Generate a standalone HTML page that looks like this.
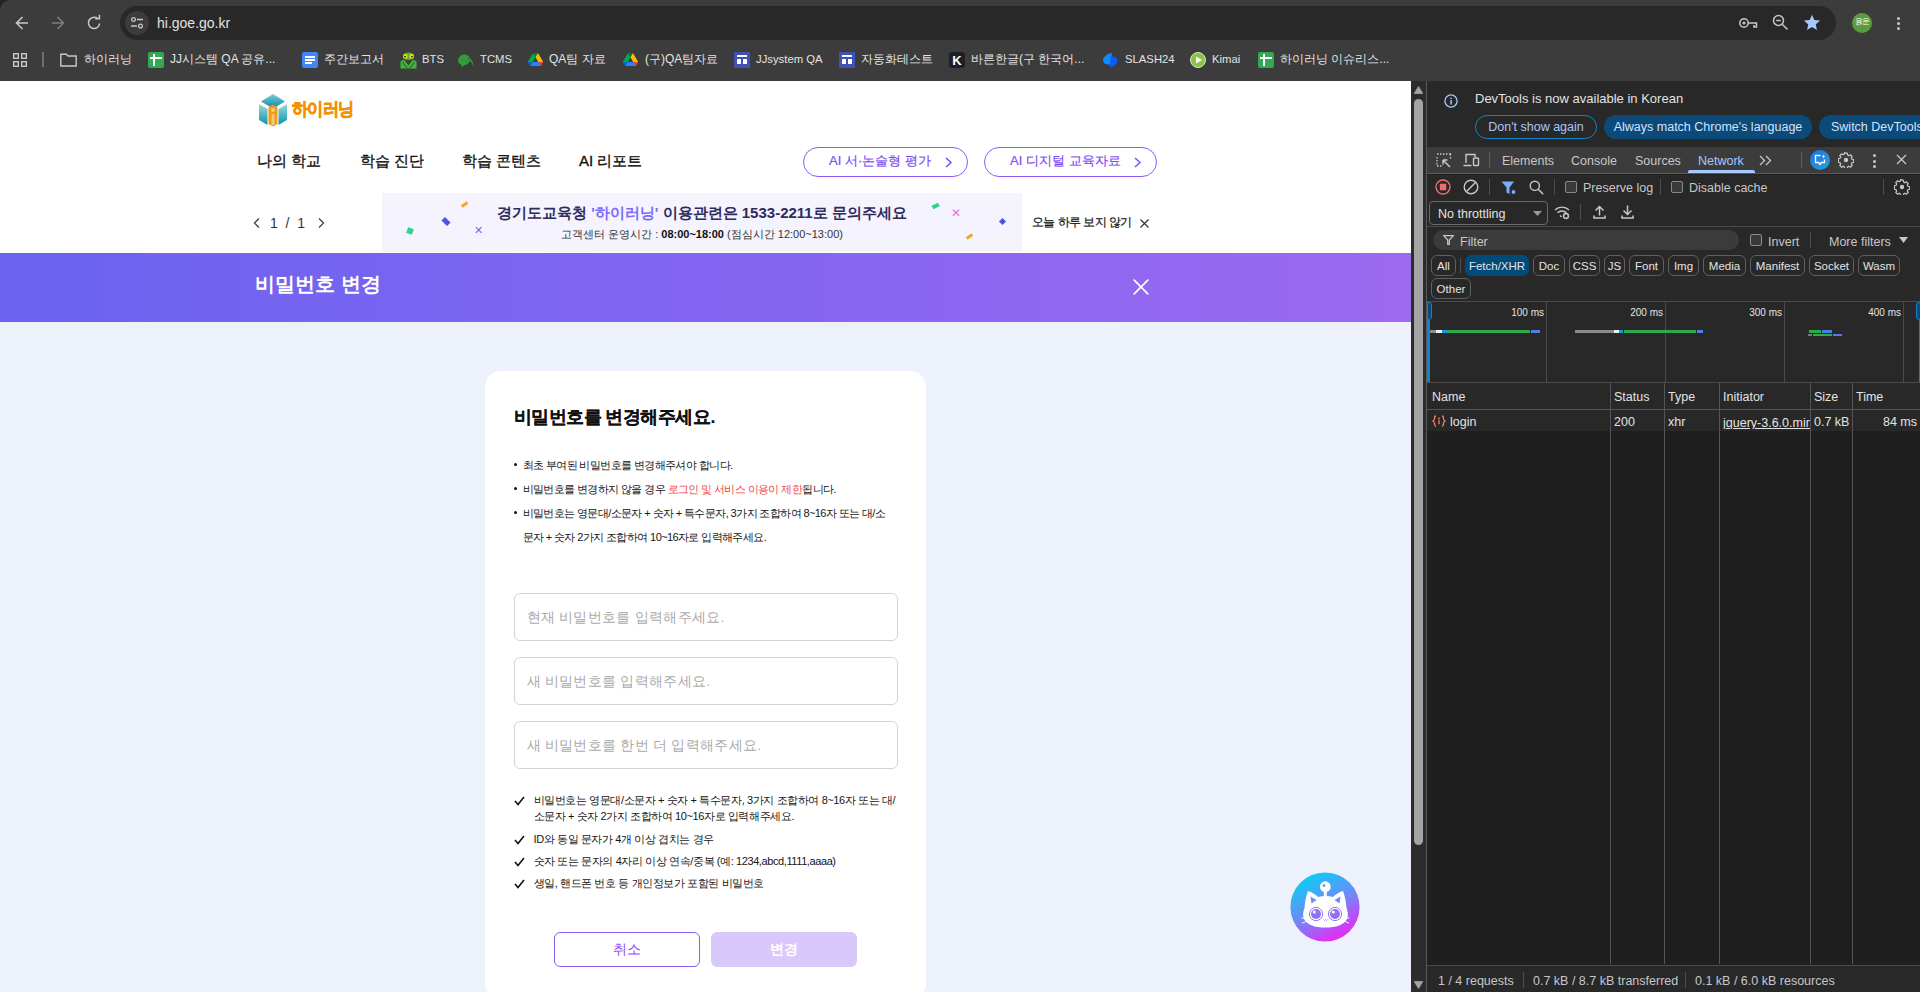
<!DOCTYPE html>
<html><head><meta charset="utf-8">
<style>
*{margin:0;padding:0;box-sizing:border-box}
html,body{width:1920px;height:992px;overflow:hidden;background:#3c3c3c;font-family:"Liberation Sans",sans-serif}
.a{position:absolute}
.t{position:absolute;white-space:nowrap;line-height:1}
/* chrome */
#chrome{left:0;top:0;width:1920px;height:81px;background:#3c3c3c}
#omni{left:120px;top:6px;width:1716px;height:34px;border-radius:17px;background:#282828}
.bm{position:absolute;top:51px;height:17px;color:#e3e3e3;font-size:12px;line-height:17px;white-space:nowrap}
/* page */
#page{left:0;top:81px;width:1411px;height:911px;background:#edf1fb;overflow:hidden}
#hdr{left:0;top:0;width:1411px;height:172px;background:#fff}
#pbar{left:0;top:172px;width:1411px;height:69px;background:linear-gradient(90deg,#6a63f1 0%,#8766f0 60%,#9d69f0 100%)}
#card{left:484.5px;top:290px;width:441.5px;height:628px;background:#fff;border-radius:16px}
.nav{top:70px;font-size:15px;color:#111;line-height:20px;-webkit-text-stroke:0.35px #111}
.pill{top:66px;height:30px;border:1.3px solid #8b5cf6;border-radius:15px}
.pilltxt{top:72px;font-size:13px;color:#7d4cf5;line-height:16px;-webkit-text-stroke:0.2px #7d4cf5}
.bul{font-size:11px;letter-spacing:-0.6px;color:#151515;line-height:24px;white-space:nowrap;padding-left:9px}
.bul i{position:absolute;left:0;top:9.5px;width:3.5px;height:3.5px;border-radius:2px;background:#151515}
.inp{left:29px;width:384px;height:48px;border:1px solid #d4d4d4;border-radius:6px}
.inp span{position:absolute;left:12px;top:15px;font-size:13.5px;color:#aaa;line-height:18px;white-space:nowrap;letter-spacing:0.3px}
.chk{left:29px;font-size:11px;letter-spacing:-0.4px;color:#151515;line-height:16px;white-space:nowrap;padding-left:20px}
.chk svg{position:absolute;left:0;top:4px;width:11px;height:10px}
.dtx{line-height:14px}
.cb{width:12px;height:12px;border:1px solid #8a8a8a;border-radius:2px;background:#3a3a3a}
.chip{height:21px;border:1px solid #5f5f5f;border-radius:6px;color:#e3e3e3;font-size:11.5px;line-height:20px;text-align:center;white-space:nowrap}
.chip.on{background:#004a77;border-color:#004a77}
.ms{top:225px;font-size:10px;color:#e3e3e3;width:40px;text-align:right}
.col{top:302px;width:1px;height:581px;background:#555}
.th{top:309px;font-size:12.5px;color:#e3e3e3}
.td{top:334px;font-size:12.5px;color:#e3e3e3}
/* scrollbar */
#sb{left:1411px;top:81px;width:15px;height:911px;background:#2c2c2c}
/* devtools */
#dt{left:1426px;top:81px;width:494px;height:911px;background:#1f1f1f;border-left:1px solid #5a5a5a;overflow:hidden}
</style></head><body>
<div id="chrome" class="a">
  <div class="a" style="left:0;top:0;width:10px;height:10px;background:#222;border-bottom-right-radius:0"></div>
  <div class="a" style="left:0;top:0;width:12px;height:12px;background:#3c3c3c;border-top-left-radius:10px"></div>
  <!-- back -->
  <svg class="a" style="left:13px;top:13px" width="18" height="20" viewBox="0 0 18 20"><path d="M15 10H3.5M9.5 4L3.5 10l6 6" fill="none" stroke="#c7c7c7" stroke-width="1.6"/></svg>
  <svg class="a" style="left:49px;top:13px" width="18" height="20" viewBox="0 0 18 20"><path d="M3 10h11.5M8.5 4l6 6-6 6" fill="none" stroke="#7d7d7d" stroke-width="1.6"/></svg>
  <svg class="a" style="left:85px;top:13px" width="18" height="20" viewBox="0 0 18 20"><path d="M14.6 10.5A5.6 5.6 0 1 1 12.6 5.6" fill="none" stroke="#c7c7c7" stroke-width="1.6"/><path d="M10.2 4.2h4.2v-4" fill="none" stroke="#c7c7c7" stroke-width="1.6" transform="translate(0 1.6)"/></svg>
  <div id="omni" class="a"></div>
  <div class="a" style="left:125px;top:11px;width:24px;height:24px;border-radius:12px;background:#3c3c3c"></div>
  <svg class="a" style="left:129px;top:15px" width="16" height="16" viewBox="0 0 16 16"><circle cx="4.5" cy="4.5" r="1.9" fill="none" stroke="#c7c7c7" stroke-width="1.3"/><path d="M8 4.5h6M2 11h6" stroke="#c7c7c7" stroke-width="1.3"/><circle cx="11.5" cy="11" r="1.9" fill="none" stroke="#c7c7c7" stroke-width="1.3"/></svg>
  <div class="t" style="left:157px;top:15px;font-size:14px;color:#e3e3e3;line-height:16px">hi.goe.go.kr</div>
  <!-- key -->
  <svg class="a" style="left:1738px;top:15px" width="20" height="16" viewBox="0 0 20 16"><circle cx="6" cy="8" r="4.2" fill="none" stroke="#c7c7c7" stroke-width="1.5"/><circle cx="6" cy="8" r="1.6" fill="#c7c7c7"/><path d="M10.2 8H18.5v4h-2.5v-2" fill="none" stroke="#c7c7c7" stroke-width="1.5"/></svg>
  <!-- zoom -->
  <svg class="a" style="left:1772px;top:14px" width="17" height="17" viewBox="0 0 17 17"><circle cx="6.5" cy="6.5" r="5" fill="none" stroke="#c7c7c7" stroke-width="1.5"/><path d="M4.2 6.5h4.6M10.2 10.2l5.3 5.3" stroke="#c7c7c7" stroke-width="1.5"/></svg>
  <!-- star -->
  <svg class="a" style="left:1803px;top:14px" width="18" height="17" viewBox="0 0 18 17"><path d="M9 0.8l2.3 5.3 5.8.5-4.4 3.8 1.3 5.7L9 13.1 4 16.1l1.3-5.7L.9 6.6l5.8-.5z" fill="#a8c7fa"/></svg>
  <!-- avatar -->
  <div class="a" style="left:1852px;top:13px;width:20px;height:20px;border-radius:10px;background:#5b9d3c"></div>
  <div class="t" style="left:1852px;top:18px;width:20px;text-align:center;font-size:8px;color:#fff;letter-spacing:-0.5px">용운</div>
  <!-- menu -->
  <div class="a" style="left:1896.5px;top:16.5px;width:3.5px;height:3.5px;border-radius:2px;background:#c7c7c7"></div>
  <div class="a" style="left:1896.5px;top:21.5px;width:3.5px;height:3.5px;border-radius:2px;background:#c7c7c7"></div>
  <div class="a" style="left:1896.5px;top:26.5px;width:3.5px;height:3.5px;border-radius:2px;background:#c7c7c7"></div>

  <!-- bookmarks -->
  <svg class="a" style="left:13px;top:53px" width="14" height="14" viewBox="0 0 14 14" fill="none" stroke="#c7c7c7" stroke-width="1.4"><rect x="0.7" y="0.7" width="4.6" height="4.6"/><rect x="8.7" y="0.7" width="4.6" height="4.6"/><rect x="0.7" y="8.7" width="4.6" height="4.6"/><rect x="8.7" y="8.7" width="4.6" height="4.6"/></svg>
  <div class="a" style="left:42px;top:52px;width:1.5px;height:15px;background:#6e6e6e"></div>
  <svg class="a" style="left:60px;top:53px" width="17" height="14" viewBox="0 0 17 14"><path d="M0.8 1.2h5.5l1.8 1.8h8.1v10H0.8z" fill="none" stroke="#c7c7c7" stroke-width="1.4"/></svg>
  <div class="bm" style="left:84px">하이러닝</div>
  <div class="a" style="left:148px;top:52px;width:16px;height:16px;border-radius:2px;background:#34a853"></div>
  <div class="a" style="left:150px;top:57px;width:12px;height:2px;background:#fff"></div><div class="a" style="left:153px;top:54px;width:2px;height:12px;background:#fff"></div>
  <div class="bm" style="left:170px">JJ시스템 QA 공유...</div>
  <div class="a" style="left:302px;top:52px;width:16px;height:16px;border-radius:2px;background:#4285f4"></div>
  <div class="a" style="left:305px;top:56px;width:10px;height:1.6px;background:#fff"></div><div class="a" style="left:305px;top:59px;width:10px;height:1.6px;background:#fff"></div><div class="a" style="left:305px;top:62px;width:7px;height:1.6px;background:#fff"></div>
  <div class="bm" style="left:324px">주간보고서</div>
  <svg class="a" style="left:400px;top:52px" width="17" height="17" viewBox="0 0 17 17"><path d="M0.5 16.5V9.5L4 7.5 8.5 13.5 13 7.5l3.5 2v7z" fill="#43b43a"/><path d="M2.5 10l5 6.5M14.5 10l-5 6.5" stroke="#1f6b22" stroke-width="1.1"/><path d="M3 4C3 1.8 5 0.5 8.5 0.5S14 1.8 14 4 12 8 8.5 8 3 6.2 3 4z" fill="#49b83d"/><circle cx="5.3" cy="4.4" r="2.3" fill="#f0e000"/><circle cx="11.7" cy="4.4" r="2.3" fill="#f0e000"/><circle cx="5" cy="4.6" r="0.9" fill="#111"/><circle cx="12" cy="4.6" r="0.9" fill="#111"/></svg>
  <div class="bm" style="left:422px;top:51px;font-size:11.3px">BTS</div>
  <svg class="a" style="left:457px;top:53px" width="18" height="16" viewBox="0 0 18 16"><path d="M1 8C1 4 4 1.5 7.5 1.5C10.5 1.5 12.5 3.5 13 5.5C15 7 16 9 16.5 12.5L15.8 12.6C15.2 10 14 8.5 12.8 7.8C12 10.5 9.5 12.5 6.5 12.5L5 14.5L4.6 12C2.5 11.2 1 9.8 1 8Z" fill="#329c3b"/><circle cx="11.6" cy="5.6" r="0.8" fill="#1a5a24"/></svg>
  <div class="bm" style="left:480px;top:51px;font-size:11.3px">TCMS</div>
  <svg class="a" style="left:528px;top:53px" width="15" height="13.4" viewBox="0 0 87.3 78"><path d="m6.6 66.85 3.85 6.65c.8 1.4 1.950 2.5 3.3 3.3l13.75-23.8h-27.5c0 1.55.4 3.1 1.2 4.5z" fill="#0066da"/><path d="m43.65 25-13.75-23.8c-1.35.8-2.5 1.9-3.3 3.3l-25.4 44a9.06 9.06 0 0 0 -1.2 4.5h27.5z" fill="#00ac47"/><path d="m73.55 76.8c1.35-.8 2.5-1.9 3.3-3.3l1.6-2.75 7.65-13.25c.8-1.4 1.2-2.95 1.2-4.5h-27.502l5.852 11.5z" fill="#ea4335"/><path d="m43.65 25 13.75-23.8c-1.35-.8-2.9-1.2-4.5-1.2h-18.5c-1.6 0-3.150.45-4.5 1.2z" fill="#00832d"/><path d="m59.8 53h-32.3l-13.75 23.8c1.35.8 2.9 1.2 4.5 1.2h50.8c1.6 0 3.15-.45 4.5-1.2z" fill="#2684fc"/><path d="m73.4 26.5-12.7-22c-.8-1.4-1.95-2.5-3.3-3.3l-13.75 23.8 16.15 28h27.45c0-1.55-.4-3.1-1.2-4.5z" fill="#ffba00"/></svg>
  <div class="bm" style="left:549px">QA팀 자료</div>
  <svg class="a" style="left:623px;top:53px" width="15" height="13.4" viewBox="0 0 87.3 78"><path d="m6.6 66.85 3.85 6.65c.8 1.4 1.950 2.5 3.3 3.3l13.75-23.8h-27.5c0 1.55.4 3.1 1.2 4.5z" fill="#0066da"/><path d="m43.65 25-13.75-23.8c-1.35.8-2.5 1.9-3.3 3.3l-25.4 44a9.06 9.06 0 0 0 -1.2 4.5h27.5z" fill="#00ac47"/><path d="m73.55 76.8c1.35-.8 2.5-1.9 3.3-3.3l1.6-2.75 7.65-13.25c.8-1.4 1.2-2.95 1.2-4.5h-27.502l5.852 11.5z" fill="#ea4335"/><path d="m43.65 25 13.75-23.8c-1.35-.8-2.9-1.2-4.5-1.2h-18.5c-1.6 0-3.150.45-4.5 1.2z" fill="#00832d"/><path d="m59.8 53h-32.3l-13.75 23.8c1.35.8 2.9 1.2 4.5 1.2h50.8c1.6 0 3.15-.45 4.5-1.2z" fill="#2684fc"/><path d="m73.4 26.5-12.7-22c-.8-1.4-1.95-2.5-3.3-3.3l-13.75 23.8 16.15 28h27.45c0-1.55-.4-3.1-1.2-4.5z" fill="#ffba00"/></svg>
  <div class="bm" style="left:645px">(구)QA팀자료</div>
  <div class="a" style="left:734px;top:52px;width:16px;height:16px;background:#3f51b5"></div>
  <div class="a" style="left:737px;top:55px;width:10px;height:2px;background:#fff"></div><div class="a" style="left:737px;top:59px;width:4px;height:5px;background:#fff"></div><div class="a" style="left:743px;top:59px;width:4px;height:5px;background:#fff"></div>
  <div class="bm" style="left:756px;top:51px;font-size:11.3px">JJsystem QA</div>
  <div class="a" style="left:839px;top:52px;width:16px;height:16px;background:#3f51b5"></div>
  <div class="a" style="left:842px;top:55px;width:10px;height:2px;background:#fff"></div><div class="a" style="left:842px;top:59px;width:4px;height:5px;background:#fff"></div><div class="a" style="left:848px;top:59px;width:4px;height:5px;background:#fff"></div>
  <div class="bm" style="left:861px">자동화테스트</div>
  <div class="a" style="left:949px;top:52px;width:16px;height:16px;border-radius:3px;background:#1e1e24"></div>
  <div class="t" style="left:951px;top:54px;width:12px;text-align:center;font-size:13px;font-weight:bold;color:#fff">K</div>
  <div class="bm" style="left:971px">바른한글(구 한국어...</div>
  <svg class="a" style="left:1102px;top:52px" width="17" height="17" viewBox="0 0 17 17"><path d="M9.8 0.8C5 2 1 5 1 8.5 1 11 3.5 12.8 8.8 12.5Z" fill="#0c8cff"/><path d="M7.8 15.8C12 14.5 15.5 11.5 15.5 8.5 15.5 6 13 4.2 8.5 4.3Z" fill="#0a5ef5"/></svg>
  <div class="bm" style="left:1125px;top:51px;font-size:11.3px">SLASH24</div>
  <div class="a" style="left:1190px;top:52px;width:16px;height:16px;border-radius:8px;background:#8bc34a;border:1.5px solid #d8ecc0"></div>
  <svg class="a" style="left:1195px;top:56px" width="8" height="8" viewBox="0 0 8 8"><path d="M1 0.5L7 4 1 7.5z" fill="#fff"/></svg>
  <div class="bm" style="left:1212px;top:51px;font-size:11.3px">Kimai</div>
  <div class="a" style="left:1258px;top:52px;width:16px;height:16px;border-radius:2px;background:#34a853"></div>
  <div class="a" style="left:1260px;top:57px;width:12px;height:2px;background:#fff"></div><div class="a" style="left:1263px;top:54px;width:2px;height:12px;background:#fff"></div>
  <div class="bm" style="left:1280px">하이러닝 이슈리스...</div>
</div>

<div id="page" class="a">
  <div id="hdr" class="a">
    <svg class="a" style="left:258px;top:12px" width="30" height="34" viewBox="0 0 30 34">
      <defs>
        <linearGradient id="lg1" x1="0" y1="0" x2="0" y2="1"><stop offset="0" stop-color="#9fd9d6"/><stop offset="1" stop-color="#0a93b5"/></linearGradient>
        <linearGradient id="lg2" x1="0" y1="0" x2="0" y2="1"><stop offset="0" stop-color="#7ccfd0"/><stop offset="1" stop-color="#0b86a8"/></linearGradient>
      </defs>
      <path d="M15 1L27 8.5 15 15.5 3 8.5z" fill="url(#lg2)"/>
      <path d="M1 11l8.5 5v16L1 27z" fill="url(#lg1)"/>
      <path d="M29 11l-8.5 5v16l8.5-5z" fill="url(#lg1)"/>
      <path d="M10.5 14.5l4.5-3 4.5 3V31l-4.5 2.5-4.5-2.5z" fill="#f39a0f"/>
      <circle cx="15" cy="17" r="2" fill="#f7cf8a"/>
      <path d="M13.5 21h3v11h-3z" fill="#f5c77c"/>
    </svg>
    <div class="t" id="logotxt" style="left:292px;top:19px;font-size:18px;font-weight:bold;color:#f39200;letter-spacing:-1px;transform-origin:0 0;transform:scaleX(0.9);-webkit-text-stroke:0.6px #f39200">하이러닝</div>

    <div class="t nav" style="left:257px">나의 학교</div>
    <div class="t nav" style="left:360px">학습 진단</div>
    <div class="t nav" style="left:462px">학습 콘텐츠</div>
    <div class="t nav" style="left:579px">AI 리포트</div>

    <div class="a pill" style="left:803px;width:165px"></div>
    <div class="t pilltxt" style="left:829px">AI 서·논술형 평가</div>
    <svg class="a" style="left:944px;top:76px" width="9" height="11" viewBox="0 0 9 11"><path d="M2 1l5 4.5L2 10" fill="none" stroke="#7d4cf5" stroke-width="1.5"/></svg>
    <div class="a pill" style="left:984px;width:173px"></div>
    <div class="t pilltxt" style="left:1010px">AI 디지털 교육자료</div>
    <svg class="a" style="left:1133px;top:76px" width="9" height="11" viewBox="0 0 9 11"><path d="M2 1l5 4.5L2 10" fill="none" stroke="#7d4cf5" stroke-width="1.5"/></svg>

    <!-- pager -->
    <svg class="a" style="left:252px;top:136px" width="9" height="12" viewBox="0 0 9 12"><path d="M7 1.5L2.5 6 7 10.5" fill="none" stroke="#444" stroke-width="1.3"/></svg>
    <div class="t" style="left:270px;top:134px;font-size:14px;color:#333;line-height:16px">1&nbsp;&nbsp;/&nbsp;&nbsp;1</div>
    <svg class="a" style="left:317px;top:136px" width="9" height="12" viewBox="0 0 9 12"><path d="M2 1.5L6.5 6 2 10.5" fill="none" stroke="#444" stroke-width="1.3"/></svg>

    <div class="a" style="left:382px;top:112px;width:640px;height:59px;background:#f4f3fe"></div>
    <div class="t" style="left:382px;top:123px;width:640px;text-align:center;font-size:15px;font-weight:bold;color:#2e2b5c;line-height:18px">경기도교육청 <span style="color:#7b6cf6">'하이러닝'</span> 이용관련은 1533-2211로 문의주세요</div>
    <div class="t" style="left:382px;top:146px;width:640px;text-align:center;font-size:11px;color:#333;line-height:14px">고객센터 운영시간 : <b style="color:#111">08:00~18:00</b> (점심시간 12:00~13:00)</div>
    <!-- confetti -->
    <div class="a" style="left:407px;top:147px;width:6px;height:6px;background:#2ed48a;transform:rotate(20deg)"></div>
    <div class="a" style="left:442px;top:138px;width:8px;height:5px;background:#4a55e8;transform:rotate(45deg)"></div>
    <div class="a" style="left:461px;top:122px;width:7px;height:2.5px;background:#f5a623;transform:rotate(-35deg)"></div>
    <div class="t" style="left:474px;top:144px;font-size:11px;color:#8a5cf6">✕</div>
    <div class="a" style="left:932px;top:123px;width:7px;height:3.5px;background:#2ed48a;transform:rotate(-25deg)"></div>
    <div class="t" style="left:951px;top:126px;font-size:12px;color:#f06ce0">✕</div>
    <div class="a" style="left:1000px;top:138px;width:5px;height:5px;background:#4a55e8;transform:rotate(45deg)"></div>
    <div class="a" style="left:966px;top:154px;width:7px;height:3px;background:#f5a623;transform:rotate(-35deg)"></div>

    <div class="t" style="left:1032px;top:134px;font-size:12.4px;letter-spacing:-0.6px;color:#111;line-height:15px;-webkit-text-stroke:0.2px #111">오늘 하루 보지 않기</div>
    <svg class="a" style="left:1139px;top:137px" width="11" height="11" viewBox="0 0 11 11"><path d="M1.5 1.5l8 8M9.5 1.5l-8 8" stroke="#333" stroke-width="1.2"/></svg>
  </div>
  <div id="pbar" class="a">
    <div class="t" style="left:255px;top:19px;font-size:20px;font-weight:bold;color:#fff;line-height:24px">비밀번호 변경</div>
    <svg class="a" style="left:1132px;top:25px" width="18" height="18" viewBox="0 0 18 18"><path d="M2.2 2.2l13.6 13.6M15.8 2.2L2.2 15.8" stroke="#fff" stroke-width="1.7" stroke-linecap="round"/></svg>
  </div>
  <div id="card" class="a">
    <div class="t" style="left:29px;top:34px;font-size:17.8px;letter-spacing:-0.5px;font-weight:bold;color:#111;line-height:24px;-webkit-text-stroke:0.1px #111">비밀번호를 변경해주세요.</div>
    <div class="a bul" style="left:29px;top:82px"><i></i>최초 부여된 비밀번호를 변경해주셔야 합니다.</div>
    <div class="a bul" style="left:29px;top:106px"><i></i>비밀번호를 변경하지 않을 경우 <span style="color:#f04848">로그인 및 서비스 이용이 제한</span>됩니다.</div>
    <div class="a bul" style="left:29px;top:130px;white-space:nowrap"><i></i>비밀번호는 영문대/소문자 + 숫자 + 특수문자, 3가지 조합하여 8~16자 또는 대/소<br>문자 + 숫자 2가지 조합하여 10~16자로 입력해주세요.</div>

    <div class="a inp" style="top:222px"><span>현재 비밀번호를 입력해주세요.</span></div>
    <div class="a inp" style="top:286px"><span>새 비밀번호를 입력해주세요.</span></div>
    <div class="a inp" style="top:350px"><span>새 비밀번호를 한번 더 입력해주세요.</span></div>

    <div class="a chk" style="top:421px"><svg viewBox="0 0 11 10"><path d="M1 5l3 3.5L10 1" fill="none" stroke="#111" stroke-width="1.6"/></svg>비밀번호는 영문대/소문자 + 숫자 + 특수문자, 3가지 조합하여 8~16자 또는 대/<br>소문자 + 숫자 2가지 조합하여 10~16자로 입력해주세요.</div>
    <div class="a chk" style="top:460px"><svg viewBox="0 0 11 10"><path d="M1 5l3 3.5L10 1" fill="none" stroke="#111" stroke-width="1.6"/></svg>ID와 동일 문자가 4개 이상 겹치는 경우</div>
    <div class="a chk" style="top:482px"><svg viewBox="0 0 11 10"><path d="M1 5l3 3.5L10 1" fill="none" stroke="#111" stroke-width="1.6"/></svg>숫자 또는 문자의 4자리 이상 연속/중복 (예: 1234,abcd,1111,aaaa)</div>
    <div class="a chk" style="top:504px"><svg viewBox="0 0 11 10"><path d="M1 5l3 3.5L10 1" fill="none" stroke="#111" stroke-width="1.6"/></svg>생일, 핸드폰 번호 등 개인정보가 포함된 비밀번호</div>

    <div class="a" style="left:69px;top:561px;width:146px;height:35px;border:1.5px solid #8b5cf6;border-radius:6px"></div>
    <div class="t" style="left:69px;top:569px;width:146px;text-align:center;font-size:14px;color:#8a4af3;line-height:18px">취소</div>
    <div class="a" style="left:226px;top:561px;width:146px;height:35px;background:#d9c9fb;border-radius:6px"></div>
    <div class="t" style="left:226px;top:569px;width:146px;text-align:center;font-size:14px;color:#fff;font-weight:bold;line-height:18px">변경</div>
  </div>
  <!-- chatbot -->
  <svg class="a" style="left:1290px;top:791px" width="70" height="70" viewBox="0 0 70 70">
    <defs><linearGradient id="cb" x1="0.25" y1="0" x2="0.75" y2="1"><stop offset="0" stop-color="#05d2f3"/><stop offset="0.5" stop-color="#6f8af7"/><stop offset="1" stop-color="#f51ff5"/></linearGradient></defs>
    <circle cx="35" cy="35" r="34.6" fill="url(#cb)"/>
    <circle cx="35.3" cy="14.7" r="5.4" fill="#fff"/><circle cx="34" cy="13.6" r="1.3" fill="#5b8cf6"/>
    <rect x="33.8" y="19.5" width="3" height="6" fill="#fff"/>
    <path d="M18 19C22 20 26 23 28 25C33 23.8 38 23.8 43 25C45 23 49 20 53 19C55 24 56 30 56.5 36C58 40 58.5 44 57 47C54 53 46 55.5 35.5 55.5C25 55.5 17 53 14 47C12.5 44 13 40 14.5 36C15 30 16 24 18 19Z" fill="#fff"/>
    <path d="M20.5 24.5l6 3.5-5 3.5z M50.5 24.5l-6 3.5 5 3.5z" fill="#6c8cf6"/>
    <path d="M17 47l-5.5-1.2M17 49l-5 2.2M54 47l5.5-1.2M54 49l5 2.2" stroke="#fff" stroke-width="0.9"/>
    <circle cx="26" cy="42" r="6.6" fill="#fff" stroke="#8a64f2" stroke-width="0.9"/><circle cx="26" cy="42" r="5" fill="#8f72f4"/><circle cx="24.3" cy="40" r="1.5" fill="#fff"/>
    <circle cx="45" cy="42" r="6.6" fill="#fff" stroke="#8a64f2" stroke-width="0.9"/><circle cx="45" cy="42" r="5" fill="#8f72f4"/><circle cx="43.3" cy="40" r="1.5" fill="#fff"/>
    <path d="M33.5 47.5l1 1 1-1 1 1 1-1" fill="none" stroke="#8a64f2" stroke-width="0.8"/>
  </svg>
</div>

<div id="sb" class="a">
  <svg class="a" style="left:3px;top:5px" width="9" height="8" viewBox="0 0 9 8"><path d="M4.5 0.5L8.8 7.5H0.2z" fill="#a3a3a3" stroke="#a3a3a3" stroke-width="0.8" stroke-linejoin="round"/></svg>
  <div class="a" style="left:3px;top:18px;width:9px;height:746px;border-radius:4.5px;background:#a3a3a3"></div>
  <svg class="a" style="left:3px;top:900px" width="9" height="8" viewBox="0 0 9 8"><path d="M4.5 7.5L8.8 0.5H0.2z" fill="#a3a3a3" stroke="#a3a3a3" stroke-width="0.8" stroke-linejoin="round"/></svg>
</div>
<div id="dt" class="a">
  <!-- notification -->
  <div class="a" style="left:0;top:0;width:494px;height:66px;background:#282828"></div>
  <svg class="a" style="left:17px;top:13px" width="14" height="14" viewBox="0 0 14 14"><circle cx="7" cy="7" r="6.1" fill="none" stroke="#a8c7fa" stroke-width="1.3"/><rect x="6.3" y="6" width="1.5" height="4.5" fill="#a8c7fa"/><rect x="6.3" y="3.6" width="1.5" height="1.4" fill="#a8c7fa"/></svg>
  <div class="t dtx" style="left:48px;top:11px;font-size:13px;color:#e3e3e3">DevTools is now available in Korean</div>
  <div class="a" style="left:48px;top:34px;width:122px;height:24px;border:1.2px solid #0f86c6;border-radius:12px"></div>
  <div class="t dtx" style="left:48px;top:39px;width:122px;text-align:center;font-size:12.5px;color:#a8c7fa">Don't show again</div>
  <div class="a" style="left:177px;top:34px;width:208px;height:24px;background:#0b4a79;border-radius:12px"></div>
  <div class="t dtx" style="left:177px;top:39px;width:208px;text-align:center;font-size:12.5px;color:#d3e3fd">Always match Chrome's language</div>
  <div class="a" style="left:392px;top:34px;width:120px;height:24px;background:#0b4a79;border-radius:12px"></div>
  <div class="t dtx" style="left:404px;top:39px;font-size:12.5px;color:#d3e3fd">Switch DevTools</div>

  <!-- tab bar -->
  <div class="a" style="left:0;top:66px;width:494px;height:27px;background:#3c3c3c;border-bottom:1px solid #5a5a5a"></div>
  <svg class="a" style="left:9px;top:72px" width="16" height="15" viewBox="0 0 16 15"><path d="M1 1h1.5M4 1h1.5M7 1h1.5M10 1h1.5M13 1h1.5V2.5M1 4v1.5M1 7v1.5M1 10v1.5M1 13h1.5M14.5 4v1.5M4 13h1.5" stroke="#c7c7c7" stroke-width="1.3" fill="none"/><path d="M7 7l7 7M7 7v4.5M7 7h4.5" stroke="#c7c7c7" stroke-width="1.5" fill="none"/></svg>
  <svg class="a" style="left:36px;top:72px" width="17" height="14" viewBox="0 0 17 14"><path d="M3 10V1.5h9V4M0.5 12.5h8" stroke="#c7c7c7" stroke-width="1.4" fill="none"/><rect x="10.5" y="5" width="5" height="7.5" rx="0.8" stroke="#c7c7c7" stroke-width="1.4" fill="none"/></svg>
  <div class="a" style="left:62px;top:71px;width:1px;height:16px;background:#5e5e5e"></div>
  <div class="t dtx" style="left:75px;top:73px;font-size:12.5px;color:#c7c7c7">Elements</div>
  <div class="t dtx" style="left:144px;top:73px;font-size:12.5px;color:#c7c7c7">Console</div>
  <div class="t dtx" style="left:208px;top:73px;font-size:12.5px;color:#c7c7c7">Sources</div>
  <div class="t dtx" style="left:271px;top:73px;font-size:12.5px;color:#a8c7fa">Network</div>
  <div class="a" style="left:261px;top:89px;width:67px;height:3px;background:#a8c7fa;border-radius:2px 2px 0 0"></div>
  <svg class="a" style="left:332px;top:74px" width="13" height="11" viewBox="0 0 13 11"><path d="M1 1l4.5 4.5L1 10M7 1l4.5 4.5L7 10" stroke="#c7c7c7" stroke-width="1.3" fill="none"/></svg>
  <div class="a" style="left:374px;top:71px;width:1px;height:16px;background:#5e5e5e"></div>
  <div class="a" style="left:383px;top:69px;width:20px;height:20px;border-radius:10px;background:linear-gradient(135deg,#1a73e8,#2a9fd6)"></div>
  <svg class="a" style="left:387px;top:73px" width="12" height="12" viewBox="0 0 12 12"><path d="M6.5 1.5H1.5v7h3l1.5 2 1.5-2h3V5.5" stroke="#fff" stroke-width="1.3" fill="none"/><path d="M9.5 0.5l.6 1.4 1.4.6-1.4.6-.6 1.4-.6-1.4-1.4-.6 1.4-.6z" fill="#fff"/></svg>
  <svg class="a" style="left:411px;top:71px" width="16" height="16" viewBox="0 0 16 16"><path d="M8 1.2l1.3.2.4 1.7 1.2.6 1.5-.9 1.8 1.8-.9 1.5.6 1.2 1.7.4v2.6l-1.7.4-.6 1.2.9 1.5-1.8 1.8-1.5-.9-1.2.6-.4 1.7H6.7l-.4-1.7-1.2-.6-1.5.9-1.8-1.8.9-1.5-.6-1.2-1.7-.4V6.7l1.7-.4.6-1.2-.9-1.5 1.8-1.8 1.5.9 1.2-.6.4-1.7z" fill="none" stroke="#c7c7c7" stroke-width="1.2"/><circle cx="8" cy="8" r="2.2" fill="#c7c7c7"/></svg>
  <div class="a" style="left:446px;top:73px;width:3px;height:3px;border-radius:2px;background:#c7c7c7"></div>
  <div class="a" style="left:446px;top:78.5px;width:3px;height:3px;border-radius:2px;background:#c7c7c7"></div>
  <div class="a" style="left:446px;top:84px;width:3px;height:3px;border-radius:2px;background:#c7c7c7"></div>
  <svg class="a" style="left:469px;top:73px" width="11" height="11" viewBox="0 0 11 11"><path d="M1 1l9 9M10 1l-9 9" stroke="#c7c7c7" stroke-width="1.3"/></svg>

  <!-- toolbar 1 -->
  <div class="a" style="left:0;top:94px;width:494px;height:127px;background:#282828"></div>
  <div class="a" style="left:0;top:145px;width:494px;height:1px;background:#4a4a4a"></div>
  <svg class="a" style="left:8px;top:98px" width="16" height="16" viewBox="0 0 16 16"><circle cx="8" cy="8" r="7" fill="none" stroke="#ee6e6e" stroke-width="1.4"/><rect x="4.8" y="4.8" width="6.4" height="6.4" rx="0.6" fill="#ee6e6e"/></svg>
  <svg class="a" style="left:36px;top:98px" width="16" height="16" viewBox="0 0 16 16"><circle cx="8" cy="8" r="6.8" fill="none" stroke="#c7c7c7" stroke-width="1.4"/><path d="M3.3 12.7l9.4-9.4" stroke="#c7c7c7" stroke-width="1.4"/></svg>
  <div class="a" style="left:62px;top:98px;width:1px;height:16px;background:#4e4e4e"></div>
  <svg class="a" style="left:74px;top:100px" width="16" height="14" viewBox="0 0 16 14"><path d="M0.5 0.5h12.5L8.5 6.5v6.5l-3-1.5V6.5z" fill="#7cacf8"/><circle cx="12.5" cy="11" r="1.9" fill="#7cacf8"/></svg>
  <svg class="a" style="left:102px;top:99px" width="15" height="15" viewBox="0 0 15 15"><circle cx="5.8" cy="5.8" r="4.6" fill="none" stroke="#c7c7c7" stroke-width="1.4"/><path d="M9.2 9.2l5 5" stroke="#c7c7c7" stroke-width="1.5"/></svg>
  <div class="a" style="left:127px;top:98px;width:1px;height:16px;background:#4e4e4e"></div>
  <div class="a cb" style="left:138px;top:100px"></div>
  <div class="t dtx" style="left:156px;top:100px;font-size:12.5px;color:#c7c7c7">Preserve log</div>
  <div class="a" style="left:233px;top:98px;width:1px;height:16px;background:#4e4e4e"></div>
  <div class="a cb" style="left:244px;top:100px"></div>
  <div class="t dtx" style="left:262px;top:100px;font-size:12.5px;color:#c7c7c7">Disable cache</div>
  <div class="a" style="left:456px;top:98px;width:1px;height:16px;background:#4e4e4e"></div>
  <svg class="a" style="left:467px;top:98px" width="16" height="16" viewBox="0 0 16 16"><path d="M8 1.2l1.3.2.4 1.7 1.2.6 1.5-.9 1.8 1.8-.9 1.5.6 1.2 1.7.4v2.6l-1.7.4-.6 1.2.9 1.5-1.8 1.8-1.5-.9-1.2.6-.4 1.7H6.7l-.4-1.7-1.2-.6-1.5.9-1.8-1.8.9-1.5-.6-1.2-1.7-.4V6.7l1.7-.4.6-1.2-.9-1.5 1.8-1.8 1.5.9 1.2-.6.4-1.7z" fill="none" stroke="#c7c7c7" stroke-width="1.2"/><circle cx="8" cy="8" r="2.2" fill="#c7c7c7"/></svg>

  <!-- toolbar 2 -->
  <div class="a" style="left:2px;top:120px;width:119px;height:24px;border:1px solid #6b6b6b;border-radius:4px"></div>
  <div class="t dtx" style="left:11px;top:126px;font-size:12.5px;color:#e3e3e3">No throttling</div>
  <svg class="a" style="left:106px;top:130px" width="9" height="5" viewBox="0 0 9 5"><path d="M0 0h9L4.5 5z" fill="#9a9a9a"/></svg>
  <svg class="a" style="left:127px;top:124px" width="17" height="15" viewBox="0 0 17 15"><path d="M1 5a10 10 0 0 1 14 0M3.5 7.8a6.5 6.5 0 0 1 9 0" stroke="#c7c7c7" stroke-width="1.4" fill="none"/><path d="M6 10.5l1.5 1.5" stroke="#c7c7c7" stroke-width="1.4"/><circle cx="12" cy="11" r="2.4" fill="none" stroke="#c7c7c7" stroke-width="1.5"/></svg>
  <div class="a" style="left:153px;top:123px;width:1px;height:16px;background:#4e4e4e"></div>
  <svg class="a" style="left:166px;top:124px" width="13" height="14" viewBox="0 0 13 14"><path d="M6.5 1.5v9M2.5 5.5l4-4 4 4M1 10.5v2.5h11v-2.5" stroke="#c7c7c7" stroke-width="1.5" fill="none"/></svg>
  <svg class="a" style="left:194px;top:124px" width="13" height="14" viewBox="0 0 13 14"><path d="M6.5 0.5v9M2.5 5.5l4 4 4-4M1 10.5v2.5h11v-2.5" stroke="#c7c7c7" stroke-width="1.5" fill="none"/></svg>

  <!-- filter row -->
  <div class="a" style="left:6px;top:149px;width:306px;height:20px;border-radius:10px;background:#3b3b3b"></div>
  <svg class="a" style="left:16px;top:154px" width="11" height="10" viewBox="0 0 11 10"><path d="M0.7 0.7h9.6L6.3 5v4.3H4.7V5z" fill="none" stroke="#c7c7c7" stroke-width="1.2"/></svg>
  <div class="t dtx" style="left:33px;top:154px;font-size:12.5px;color:#c7c7c7">Filter</div>
  <div class="a cb" style="left:323px;top:153px"></div>
  <div class="t dtx" style="left:341px;top:154px;font-size:12.5px;color:#c7c7c7">Invert</div>
  <div class="a" style="left:383px;top:151px;width:1px;height:16px;background:#4e4e4e"></div>
  <div class="t dtx" style="left:402px;top:154px;font-size:12.5px;color:#c7c7c7">More filters</div>
  <svg class="a" style="left:472px;top:156px" width="9" height="6" viewBox="0 0 9 6"><path d="M0 0h9L4.5 6z" fill="#c7c7c7"/></svg>

  <!-- chips -->
  <div class="a chip" style="left:4px;top:174px;width:25px">All</div>
  <div class="a" style="left:33px;top:177px;width:1px;height:15px;background:#4e4e4e"></div>
  <div class="a chip on" style="left:38px;top:174px;width:64px">Fetch/XHR</div>
  <div class="a chip" style="left:106px;top:174px;width:32px">Doc</div>
  <div class="a chip" style="left:142px;top:174px;width:31px">CSS</div>
  <div class="a chip" style="left:177px;top:174px;width:21px">JS</div>
  <div class="a chip" style="left:202px;top:174px;width:35px">Font</div>
  <div class="a chip" style="left:241px;top:174px;width:31px">Img</div>
  <div class="a chip" style="left:276px;top:174px;width:43px">Media</div>
  <div class="a chip" style="left:323px;top:174px;width:55px">Manifest</div>
  <div class="a chip" style="left:382px;top:174px;width:45px">Socket</div>
  <div class="a chip" style="left:431px;top:174px;width:42px">Wasm</div>
  <div class="a chip" style="left:4px;top:197px;width:40px">Other</div>
  <div class="a" style="left:0;top:220px;width:494px;height:1px;background:#4a4a4a"></div>
  <div class="a" style="left:0;top:221px;width:494px;height:80px;background:#282828"></div>

  <!-- overview -->
  <div class="a" style="left:119px;top:221px;width:1px;height:80px;background:#4a4a4a"></div>
  <div class="a" style="left:238px;top:221px;width:1px;height:80px;background:#4a4a4a"></div>
  <div class="a" style="left:357px;top:221px;width:1px;height:80px;background:#4a4a4a"></div>
  <div class="a" style="left:476px;top:221px;width:1px;height:80px;background:#4a4a4a"></div>
  <div class="t dtx ms" style="left:77px">100 ms</div>
  <div class="t dtx ms" style="left:196px">200 ms</div>
  <div class="t dtx ms" style="left:315px">300 ms</div>
  <div class="t dtx ms" style="left:434px">400 ms</div>
  <div class="a" style="left:0;top:221px;width:2.5px;height:80px;background:#0e84c8"></div>
  <div class="a" style="left:0;top:221px;width:5px;height:18px;background:#0b4a79;border:1px solid #0e84c8;border-radius:0 3px 3px 0"></div>
  <div class="a" style="left:491.5px;top:221px;width:2.5px;height:80px;background:#0e84c8"></div>
  <div class="a" style="left:489px;top:221px;width:5px;height:18px;background:#0b4a79;border:1px solid #0e84c8;border-radius:3px 0 0 3px"></div>
  <!-- bars -->
  <div class="a" style="left:3px;top:249px;width:6px;height:2.5px;background:#8a8a8a"></div>
  <div class="a" style="left:9px;top:249px;width:5.5px;height:2.5px;background:#f0f0f0"></div>
  <div class="a" style="left:14.5px;top:249px;width:5px;height:2.5px;background:#1a9bd0"></div>
  <div class="a" style="left:19.5px;top:249px;width:83px;height:2.5px;background:#2cab4c"></div>
  <div class="a" style="left:103.5px;top:249px;width:9px;height:2.5px;background:#4d7fe6"></div>
  <div class="a" style="left:148px;top:249px;width:38.5px;height:2.5px;background:#8a8a8a"></div>
  <div class="a" style="left:187px;top:249px;width:5px;height:2.5px;background:#f0f0f0"></div>
  <div class="a" style="left:192px;top:249px;width:4px;height:2.5px;background:#1a9bd0"></div>
  <div class="a" style="left:197px;top:249px;width:72px;height:2.5px;background:#2cab4c"></div>
  <div class="a" style="left:270px;top:249px;width:6px;height:2.5px;background:#4d7fe6"></div>
  <div class="a" style="left:382px;top:249px;width:12px;height:2.5px;background:#2cab4c"></div>
  <div class="a" style="left:395px;top:249px;width:9.5px;height:2.5px;background:#4d7fe6"></div>
  <div class="a" style="left:381px;top:252.5px;width:4px;height:2px;background:#777"></div>
  <div class="a" style="left:386px;top:252.5px;width:19px;height:2.5px;background:#2cab4c"></div>
  <div class="a" style="left:406px;top:252.5px;width:9px;height:2.5px;background:#4d7fe6"></div>
  <div class="a" style="left:0;top:301px;width:494px;height:1px;background:#4a4a4a"></div>

  <!-- table -->
  <div class="a" style="left:0;top:302px;width:494px;height:48px;background:#282828"></div>
  <div class="a" style="left:0;top:350px;width:494px;height:533px;background:#1f1f1f"></div>
  <div class="a" style="left:0;top:328px;width:494px;height:1px;background:#555"></div>
  <div class="a col" style="left:183px"></div>
  <div class="a col" style="left:237px"></div>
  <div class="a col" style="left:292px"></div>
  <div class="a col" style="left:383px"></div>
  <div class="a col" style="left:425px"></div>
  <div class="t dtx th" style="left:5px">Name</div>
  <div class="t dtx th" style="left:187px">Status</div>
  <div class="t dtx th" style="left:241px">Type</div>
  <div class="t dtx th" style="left:296px">Initiator</div>
  <div class="t dtx th" style="left:387px">Size</div>
  <div class="t dtx th" style="left:429px">Time</div>
  <svg class="a" style="left:5px;top:334px" width="14" height="12" viewBox="0 0 14 12"><path d="M4 1C2.5 1 2.5 2 2.5 3.5S2 5.5 1 6c1 .5 1.5 1 1.5 2.5S2.5 11 4 11M10 1c1.5 0 1.5 1 1.5 2.5S12 5.5 13 6c-1 .5-1.5 1-1.5 2.5S11.5 11 10 11" fill="none" stroke="#e8845a" stroke-width="1.3"/><circle cx="7" cy="3.5" r="0.9" fill="#e8845a"/><rect x="6.3" y="5.2" width="1.4" height="4" fill="#e8845a"/></svg>
  <div class="t dtx td" style="left:23px">login</div>
  <div class="t dtx td" style="left:187px">200</div>
  <div class="t dtx td" style="left:241px">xhr</div>
  <div class="a" style="left:296px;top:332px;width:87px;height:16px;overflow:hidden"><div class="t dtx" style="left:0;top:3px;font-size:12.5px;color:#e3e3e3;text-decoration:underline">jquery-3.6.0.min.js</div></div>
  <div class="t dtx td" style="left:387px">0.7 kB</div>
  <div class="t dtx td" style="left:451px;width:39px;text-align:right">84 ms</div>

  <!-- status bar -->
  <div class="a" style="left:0;top:884px;width:494px;height:27px;background:#282828;border-top:1px solid #4a4a4a"></div>
  <div class="t dtx" style="left:11px;top:893px;font-size:12.5px;color:#c7c7c7">1 / 4 requests</div>
  <div class="a" style="left:96px;top:891px;width:1px;height:16px;background:#4e4e4e"></div>
  <div class="t dtx" style="left:106px;top:893px;font-size:12.5px;color:#c7c7c7">0.7 kB / 8.7 kB transferred</div>
  <div class="a" style="left:258px;top:891px;width:1px;height:16px;background:#4e4e4e"></div>
  <div class="t dtx" style="left:268px;top:893px;font-size:12.5px;color:#c7c7c7">0.1 kB / 6.0 kB resources</div>
</div>

</body></html>
